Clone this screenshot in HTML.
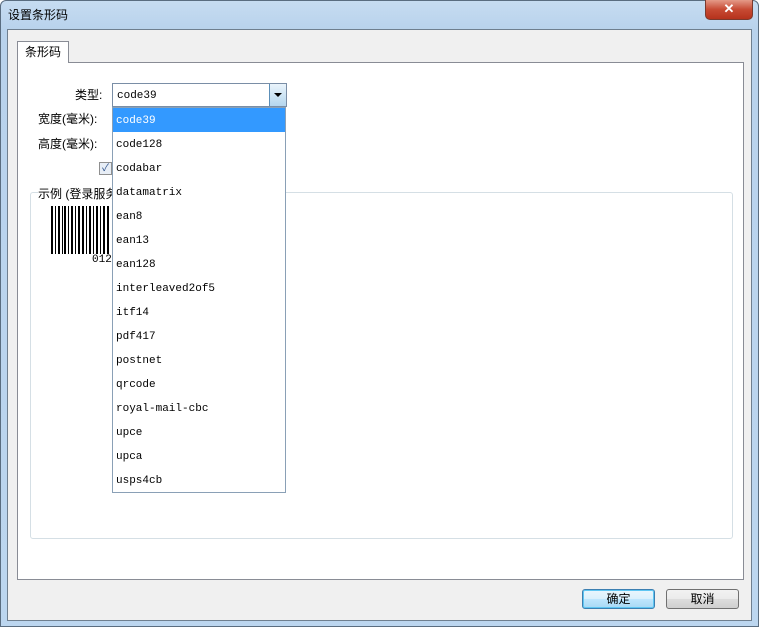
<!DOCTYPE html><html><head><style>
body{margin:0;width:759px;height:627px;overflow:hidden;background:#fff;font-family:"Liberation Sans","Noto Sans CJK SC",sans-serif;font-size:12px;}
.frame{position:absolute;left:0;top:0;width:757px;height:625px;border:1px solid #5a6d80;border-radius:6px 6px 0 0;background:linear-gradient(180deg,#c6dcf1 0,#b8d2ec 30px,#bcd6ef 100%);}
.title{position:absolute;left:8px;top:6px;font-size:12px;color:#000;}
.close{position:absolute;left:705px;top:0;width:46px;height:19px;border:1px solid #7a3a2e;border-top:none;border-radius:0 0 5px 5px;background:linear-gradient(#e49a88,#c74a33 50%,#b5321c);color:#fff;font-weight:bold;text-align:center;font-size:13px;line-height:18px;}
.client{position:absolute;left:7px;top:29px;width:743px;height:590px;background:#f0f0f0;border:1px solid #6f7f8f;}
.panel{position:absolute;left:17px;top:62px;width:725px;height:516px;background:#fff;border:1px solid #898c95;}
.tab{position:absolute;left:17px;top:41px;width:50px;height:21px;background:#fff;border:1px solid #898c95;border-bottom:none;z-index:2;text-align:center;line-height:20px;}
.lbl{position:absolute;font-size:12px;}
.group{position:absolute;left:30px;top:192px;width:701px;height:345px;border:1px solid #d5dfe5;border-radius:3px;}
.combo{position:absolute;left:112px;top:83px;width:173px;height:22px;border:1px solid #7a8ea6;background:#fff;}
.mono{font-family:"Liberation Mono",monospace;font-size:11px;}
.arrow{position:absolute;right:0;top:0;width:16px;height:22px;background:linear-gradient(#eaf4fb,#b4d6ee);border-left:1px solid #5c8fb8;}
.list{position:absolute;left:112px;top:107px;width:172px;height:384px;border:1px solid #8aa0b6;background:#fff;}
.list div{height:24px;line-height:26px;padding-left:3px;}
.sel{background:#3399ff;color:#fff;}
.btn{position:absolute;top:589px;width:71px;height:18px;border:1px solid #707070;border-radius:3px;background:linear-gradient(#f2f2f2,#ebebeb 50%,#dddddd 51%,#cfcfcf);text-align:center;line-height:18px;}
</style></head><body>
<div class="frame"></div>
<div class="title">设置条形码</div>
<div class="close">✕</div>
<div class="client"></div>
<div class="panel"></div>
<div class="tab">条形码</div>
<div class="lbl" style="left:75px;top:86px">类型:</div>
<div class="lbl" style="left:38px;top:110px">宽度(毫米):</div>
<div class="lbl" style="left:38px;top:135px">高度(毫米):</div>
<div style="position:absolute;left:99px;top:162px;width:11px;height:11px;border:1px solid #8f8f8f;background:#e8eef6;color:#2a4f8a;font-size:10px;line-height:11px;text-align:center">✓</div>
<div class="group"></div>
<div class="lbl" style="left:38px;top:185px;background:#fff;padding-right:2px">示例 (登录服务</div>
<svg style="position:absolute;left:51px;top:206px" width="62" height="48"><g fill="#000">
<rect x="0" y="0" width="2" height="48"/><rect x="4" y="0" width="1" height="48"/><rect x="7" y="0" width="2" height="48"/><rect x="11" y="0" width="1" height="48"/><rect x="13" y="0" width="2" height="48"/><rect x="17" y="0" width="1" height="48"/><rect x="20" y="0" width="2" height="48"/><rect x="24" y="0" width="1" height="48"/><rect x="27" y="0" width="2" height="48"/><rect x="31" y="0" width="2" height="48"/><rect x="35" y="0" width="1" height="48"/><rect x="38" y="0" width="2" height="48"/><rect x="42" y="0" width="1" height="48"/><rect x="45" y="0" width="2" height="48"/><rect x="49" y="0" width="1" height="48"/><rect x="52" y="0" width="2" height="48"/><rect x="56" y="0" width="2" height="48"/></g></svg>
<div class="mono" style="position:absolute;left:92px;top:254px">0123</div>
<div class="combo mono"><span style="position:absolute;left:4px;top:6px">code39</span><div class="arrow"><span style="position:absolute;left:4px;top:9px;border:4px solid transparent;border-top:4px solid #000;border-bottom:none"></span></div></div>
<div class="list mono">
<div class="sel">code39</div><div>code128</div><div>codabar</div><div>datamatrix</div><div>ean8</div><div>ean13</div><div>ean128</div><div>interleaved2of5</div><div>itf14</div><div>pdf417</div><div>postnet</div><div>qrcode</div><div>royal-mail-cbc</div><div>upce</div><div>upca</div><div>usps4cb</div>
</div>
<div class="btn" style="left:582px;border-color:#3c7fb1;background:linear-gradient(#eaf6fd,#d9f0fc 50%,#bee6fd 51%,#a7d9f5);box-shadow:inset 0 0 0 1px #5ec6f2">确定</div>
<div class="btn" style="left:666px">取消</div>
</body></html>
